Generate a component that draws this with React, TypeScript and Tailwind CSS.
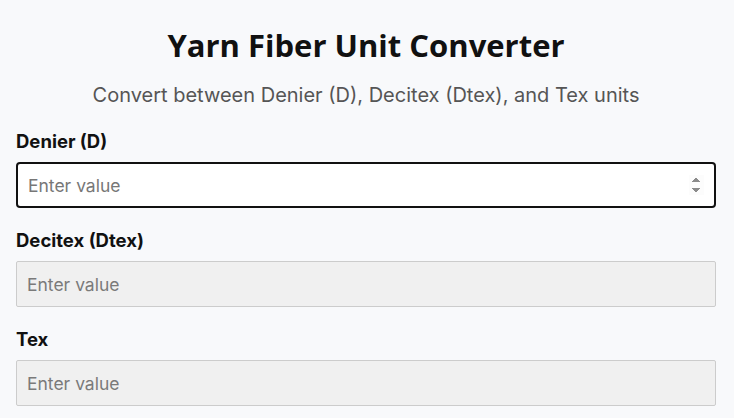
import React from "react";

export default function App() {
  const fields = [
    { label: "Denier (D)", disabled: false },
    { label: "Decitex (Dtex)", disabled: true },
    { label: "Tex", disabled: true },
  ];
  return (
    <div className="min-h-[418px] bg-[#f8f9fb] font-['Inter','Liberation_Sans',sans-serif]">
      <div className="w-[700px] ml-[16px] pt-[24px]">
        <h1 className="text-center text-[31px] leading-[42px] font-bold text-[#111] font-['Open_Sans','Noto_Sans',sans-serif]">
          Yarn Fiber Unit Converter
        </h1>
        <p className="text-center text-[20px] leading-[28px] text-[#555] mt-[15px]">
          Convert between Denier (D), Decitex (Dtex), and Tex units
        </p>
        <div className="mt-[19px]">
          {fields.map((f, i) => (
            <div key={f.label} className="mb-[19px]">
              <label className="block text-[18.5px] leading-[26px] font-bold text-[#111] mb-[8px]">
                {f.label}
              </label>
              {f.disabled ? (
                <input
                  type="number"
                  disabled
                  placeholder="Enter value"
                  className="block w-full h-[46px] px-[10px] text-[17.5px] bg-[#f0f0f0] border border-[#ccc] rounded-[2px] placeholder:text-[#7a7a7a] outline-none"
                />
              ) : (
                <input
                  type="number"
                  autoFocus={i === 0}
                  placeholder="Enter value"
                  className="block w-full h-[46px] px-[10px] text-[17.5px] bg-white border-2 border-[#111] rounded-[4px] placeholder:text-[#777] outline-none"
                />
              )}
            </div>
          ))}
        </div>
      </div>
    </div>
  );
}
